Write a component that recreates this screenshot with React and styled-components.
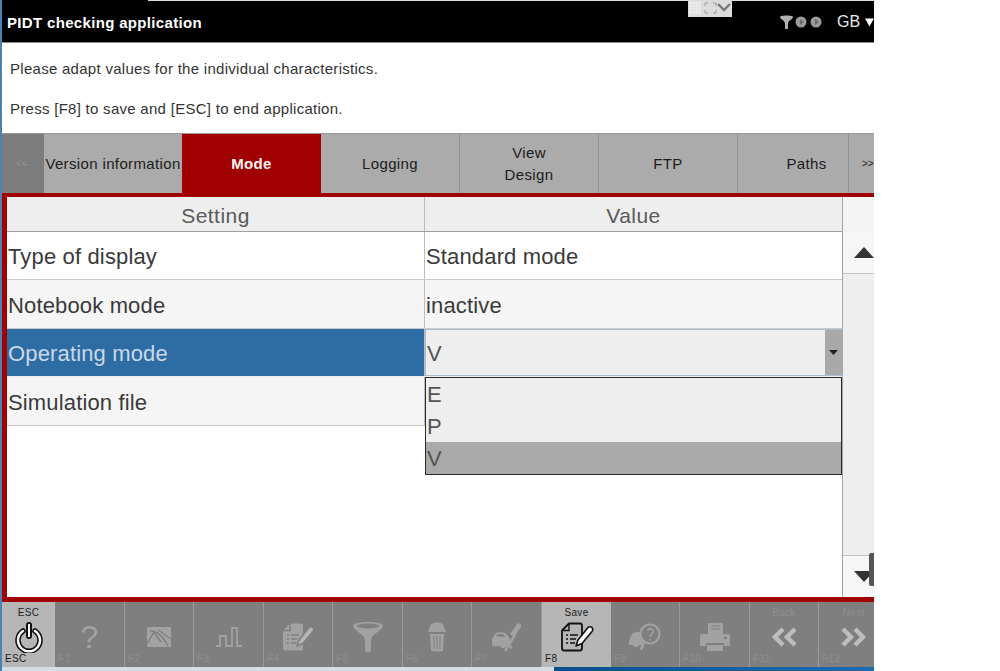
import React from "react";
import styled, { createGlobalStyle } from "styled-components";

const Global = createGlobalStyle`
  html, body { margin: 0; padding: 0; background: #fff; }
  body { font-family: "Liberation Sans", Arial, sans-serif; }
`;

const Frame = styled.div`
  position: relative;
  width: 872px;
  height: 671px;
  overflow: hidden;
  border-left: 2px solid #4b82b5;
  display: flex;
  flex-direction: column;
  background: #fff;
`;

const Header = styled.header`
  position: relative;
  flex: 0 0 43px;
  box-sizing: border-box;
  background: linear-gradient(to right, #000 146px, #ddd 146px) top / 100% 1px no-repeat, #000;
  border-bottom: 1px solid #8a8a8a;
  display: flex;
  align-items: center;
  justify-content: space-between;
  padding: 0 0 0 5px;
  color: #fff;
`;

const Title = styled.h1`
  margin: 0;
  font-size: 15px;
  font-weight: 700;
  letter-spacing: 0.33px;
  position: relative;
  top: 1px;
`;

const Status = styled.div`
  display: flex;
  align-items: center;
  gap: 15px;
  font-size: 16px;
  color: #e8e8e8;
  position: relative;
  top: 1px;
`;

const Lang = styled.span`
  display: flex;
  align-items: center;
  gap: 5px;
  width: 37px;
  white-space: nowrap;
`;

const WindowWidget = styled.div`
  position: absolute;
  left: 686px;
  top: 0;
  width: 44px;
  height: 17px;
  background: #dcdcdc;
`;

const Message = styled.section`
  flex: 0 0 90px;
  box-sizing: border-box;
  padding: 18px 0 0 8px;
  font-size: 15px;
  letter-spacing: 0.28px;
  color: #333;
  display: flex;
  flex-direction: column;
  gap: 24px;
  line-height: 16px;
`;

const Tabs = styled.nav`
  flex: 0 0 60px;
  display: flex;
  background: #ababab;
  box-sizing: border-box;
  border-top: 1px solid #999;
`;

const Tab = styled.div`
  flex: 0 0 ${(p) => p.$w}px;
  box-sizing: border-box;
  display: flex;
  align-items: center;
  justify-content: center;
  text-align: center;
  padding-left: ${(p) => p.$shift || 0}px;
  padding-top: ${(p) => (p.$active ? 0 : 1)}px;
  font-size: 15px;
  line-height: 22px;
  letter-spacing: 0.36px;
  white-space: nowrap;
  color: ${(p) => (p.$active ? "#f4f4f4" : "#1c1c1c")};
  font-weight: ${(p) => (p.$active ? 700 : 400)};
  background: ${(p) => (p.$active ? "#a00000" : "#ababab")};
  border-right: ${(p) => (p.$sep ? "1px solid #8795a3" : "none")};
`;

const Pager = styled.div`
  flex: 0 0 ${(p) => p.$w}px;
  display: flex;
  align-items: center;
  box-sizing: border-box;
  padding-left: ${(p) => p.$pad}px;
  font-size: 10px;
  font-weight: 400;
  color: ${(p) => p.$color};
  background: ${(p) => p.$bg};
`;

const RedPanel = styled.main`
  flex: 0 0 409px;
  box-sizing: border-box;
  border: 5px solid #a00000;
  border-width: 4px 0 5px 5px;
  background: #fff;
  display: flex;
  position: relative;
`;

const TableArea = styled.div`
  flex: 0 0 836px;
  display: flex;
  flex-direction: column;
  border-right: 1px solid #9aa8b5;
  box-sizing: border-box;
`;

const Row = styled.div`
  display: grid;
  grid-template-columns: 418px 1fr;
  box-sizing: border-box;
  height: ${(p) => p.$h}px;
  background: ${(p) => p.$bg || "#fff"};
  border-bottom: 1px solid ${(p) => p.$line || "#c9c9c9"};
`;

const HeadCell = styled.div`
  display: flex;
  align-items: center;
  justify-content: center;
  padding-top: 3px;
  font-size: 21px;
  letter-spacing: 0.45px;
  color: #5a5a5a;
  border-right: 1px solid #bdbdbd;
  &:last-child { border-right: 0; }
`;

const Cell = styled.div`
  display: flex;
  align-items: center;
  box-sizing: border-box;
  padding: 3px 0 0 1px;
  font-size: 22px;
  letter-spacing: 0.15px;
  color: ${(p) => (p.$selected ? "#c9d9e8" : "#3a3a3a")};
  background: ${(p) => (p.$selected ? "#2e6ca4" : "transparent")};
  border-right: ${(p) => (p.$second ? "0" : "1px solid #bdbdbd")};
`;

const Combo = styled.div`
  display: flex;
  box-sizing: border-box;
  background: #eeeeee;
  border: 1px solid #a9bdd0;
  border-right: 0;
`;

const ComboValue = styled.div`
  flex: 1;
  display: flex;
  align-items: center;
  padding: 2px 0 0 1px;
  font-size: 22px;
  color: #555;
`;

const ComboButton = styled.div`
  flex: 0 0 17px;
  background: #a9a9a9;
  display: flex;
  align-items: center;
  justify-content: center;
`;

const DropList = styled.ul`
  position: absolute;
  left: 418px;
  top: 180px;
  width: 417px;
  height: 98px;
  box-sizing: border-box;
  margin: 0;
  padding: 0;
  list-style: none;
  background: #eeeeee;
  border: 1px solid #2a2a2a;
`;

const DropItem = styled.li`
  box-sizing: border-box;
  height: ${(p) => p.$h}px;
  display: flex;
  align-items: center;
  padding: 2px 0 0 1px;
  font-size: 22px;
  color: #555;
  background: ${(p) => (p.$selected ? "#aaaaaa" : "#eeeeee")};
`;

const Scrollbar = styled.aside`
  flex: 1;
  display: flex;
  flex-direction: column;
  background: #eeeeee;
  position: relative;
`;

const ScrollCorner = styled.div`
  flex: 0 0 35px;
  background: #f3f3f3;
`;

const ScrollButton = styled.div`
  flex: 0 0 ${(p) => p.$h}px;
  box-sizing: border-box;
  background: #f6f6f6;
  display: flex;
  align-items: center;
  padding-left: 11px;
  border-${(p) => p.$edge}: 1px solid #c4c4c4;
`;

const ScrollTrack = styled.div`
  flex: 1;
`;

const Blob = styled.div`
  position: absolute;
  right: 0;
  bottom: 11px;
  width: 5px;
  height: 33px;
  border-radius: 2px 0 0 2px;
  background: #555;
`;

const Footer = styled.footer`
  flex: 0 0 65px;
  display: flex;
  background: #7f7f7f;
  overflow: hidden;
`;

const FnKey = styled.div`
  flex: 0 0 ${(p) => p.$w}px;
  box-sizing: border-box;
  display: flex;
  flex-direction: column;
  align-items: center;
  background: ${(p) => (p.$on ? "#b6b6b6" : "#7f7f7f")};
  color: ${(p) => (p.$on ? "#1c1c1c" : "#8e8e8e")};
  border-right: ${(p) => (p.$on ? "0" : "1px solid #9a9a9a")};
  padding-top: 5px;
`;

const KeyLabel = styled.div`
  height: 12px;
  font-size: 10px;
  line-height: 12px;
  letter-spacing: 0.3px;
`;

const KeyIcon = styled.div`
  height: 32px;
  margin-top: 2px;
  display: flex;
  align-items: center;
  justify-content: center;
`;

const KeyCode = styled.div`
  align-self: flex-start;
  padding-left: 3px;
  font-size: 10px;
  line-height: 12px;
  letter-spacing: 0.3px;
`;

const QuestionMark = styled.span`
  font-size: 32px;
  color: #a2a2a2;
`;

const BottomStrip = styled.div`
  flex: 1;
  background: linear-gradient(to right, #d5dde4 552px, #0a4f8c 552px, #1b6cb0 100%);
`;

const DIM = "#a2a2a2";
const BG = "#7f7f7f";

const PowerIcon = () => (
  <svg width="28" height="32" viewBox="0 0 28 32" fill="none">
    <path d="M8 10 A11 11 0 1 0 20 10" stroke="#111" strokeWidth="5.5" strokeLinecap="round" />
    <path d="M8 10 A11 11 0 1 0 20 10" stroke="#fff" strokeWidth="2.4" strokeLinecap="round" />
    <rect x="11" y="1" width="6" height="17" rx="3" fill="#111" />
    <rect x="13" y="3" width="2" height="13" fill="#fff" />
  </svg>
);

const ChartIcon = () => (
  <svg width="24" height="20" viewBox="0 0 24 20">
    <rect width="24" height="20" rx="1" fill={DIM} />
    <path d="M0 17 L7 5 L14 15 M3 4 C10 4 16 9 21 19 M11 3 L24 12" stroke={BG} strokeWidth="1.4" fill="none" />
  </svg>
);

const PulseIcon = () => (
  <svg width="26" height="20" viewBox="0 0 26 20" fill="none">
    <path d="M0 19 H4 V9 H10 V19 H16 V1 H21 V19 H26" stroke={DIM} strokeWidth="1.8" />
  </svg>
);

const EditDocIcon = ({ dim }) => {
  const line = dim ? BG : "#111";
  return (
    <svg width="34" height="30" viewBox="0 0 34 30" fill="none">
      <path
        d="M9 1.5 H20 Q22 1.5 22 3.5 V26 Q22 28.5 20 28.5 H4 Q2 28.5 2 26 V8.5 Z"
        fill={dim ? DIM : "#b6b6b6"}
        stroke={dim ? "none" : "#111"}
        strokeWidth="1.8"
        strokeLinejoin="round"
      />
      <path d="M9 1.5 V8.5 H2" stroke={line} strokeWidth="1.4" />
      <path d="M6 13 H8 M10 13 H18 M6 17 H8 M10 17 H16 M6 21 H8 M10 21 H15" stroke={line} strokeWidth="1.4" />
      <path
        d="M16 24 L18 18 L28 5.5 Q30 4 32 5.5 Q33.5 7.5 32 9.5 L22 21.5 Z"
        fill={dim ? "#b4b4b4" : "#fff"}
        stroke={line}
        strokeWidth="1.6"
        strokeLinejoin="round"
      />
    </svg>
  );
};

const FunnelIcon = () => (
  <svg width="32" height="32" viewBox="0 0 32 32">
    <path d="M1 5 C1 -0.5 31 -0.5 31 5 C31 9 20 13 19 18 V29 C19 32 13 32 13 29 V18 C12 13 1 9 1 5 Z" fill={DIM} />
    <ellipse cx="16" cy="5" rx="11" ry="2.4" fill={BG} />
  </svg>
);

const TrashIcon = () => (
  <svg width="18" height="30" viewBox="0 0 18 30">
    <path d="M2 5 C2 -1 16 -1 16 5 L18 10 H0 Z" fill={DIM} />
    <path d="M2 12 H16 L15 28 C15 30 3 30 3 28 Z" fill={DIM} />
    <path d="M6 14 V27 M9 14 V27 M12 14 V27" stroke={BG} strokeWidth="1" />
  </svg>
);

const CarToolIcon = () => (
  <svg width="32" height="30" viewBox="0 0 32 30">
    <path d="M1 17 L4 12 C5 10 12 10 14 11 L18 15 L20 20 L18 24 H15 C14 27 10 27 9 24 H5 C3 25 1 24 1 22 Z" fill={DIM} />
    <path d="M5 14 L7 12 H12 L14 15 Z" fill={BG} />
    <path d="M19 12 L26 2 C28 0 31 2 30 5 L23 15 Z" fill={DIM} />
    <path d="M14 29 L24 13 M12 19 L21 26" stroke={DIM} strokeWidth="2.5" />
  </svg>
);

const CarSearchIcon = () => (
  <svg width="32" height="28" viewBox="0 0 32 28" fill="none">
    <path d="M0 18 L3 11 C4 9 12 8 15 10 L15 22 H10 C9 25 5 25 4 22 H0 Z" fill={DIM} />
    <circle cx="21" cy="11" r="9.5" fill={BG} stroke={DIM} strokeWidth="2.2" />
    <path d="M15 19 L12 27" stroke={DIM} strokeWidth="2.5" />
    <path d="M18.5 8 C19.5 4.5 25 5 24 9 C23.5 11 21 11 21 14 M21 16 V17.5" stroke={DIM} strokeWidth="1.6" />
  </svg>
);

const PrinterIcon = () => (
  <svg width="30" height="28" viewBox="0 0 30 28">
    <rect x="8" y="0" width="15" height="11" fill={DIM} />
    <path d="M11 3 H20 M11 6 H20" stroke={BG} strokeWidth="1" />
    <path d="M2 11 H28 C29 11 30 12 30 13 V23 H24 V20 H6 V23 H0 V13 C0 12 1 11 2 11 Z" fill={DIM} />
    <rect x="7" y="22" width="16" height="6" fill={DIM} />
    <rect x="24" y="14" width="3" height="2" fill={BG} />
  </svg>
);

const Chevrons = ({ flip }) => (
  <svg width="27" height="20" viewBox="0 0 27 20" fill="none" style={flip ? { transform: "scaleX(-1)" } : undefined}>
    <path d="M12 2 L4 10 L12 18 M24 2 L16 10 L24 18" stroke="#bdbdbd" strokeWidth="4.5" />
  </svg>
);

const Tri = ({ size, down, color }) => (
  <svg width={size} height={size * 0.55} viewBox="0 0 20 11">
    <path d={down ? "M0 0 H20 L10 11 Z" : "M10 0 L20 11 H0 Z"} fill={color} />
  </svg>
);

const keys = [
  { w: 53, top: "ESC", code: "ESC", on: true, icon: <PowerIcon /> },
  { w: 70, code: "F1", icon: <QuestionMark>?</QuestionMark> },
  { w: 69, code: "F2", icon: <ChartIcon /> },
  { w: 70, code: "F3", icon: <PulseIcon /> },
  { w: 69, code: "F4", icon: <EditDocIcon dim /> },
  { w: 70, code: "F5", icon: <FunnelIcon /> },
  { w: 69, code: "F6", icon: <TrashIcon /> },
  { w: 70, code: "F7", icon: <CarToolIcon /> },
  { w: 69, top: "Save", code: "F8", on: true, icon: <EditDocIcon /> },
  { w: 69, code: "F9", icon: <CarSearchIcon /> },
  { w: 70, code: "F10", icon: <PrinterIcon /> },
  { w: 69, top: "Back", code: "F11", icon: <Chevrons /> },
  { w: 70, top: "Next", code: "F12", icon: <Chevrons flip /> },
];

export default function App() {
  return (
    <>
      <Global />
      <Frame>
        <Header>
          <Title>PIDT checking application</Title>
          <WindowWidget>
            <svg width="44" height="17" viewBox="0 0 44 17" fill="none">
              <path d="M3 1 V15 M6 1 V15 M9 1 V15 M12 1 V15 M1 3 H13 M1 6 H13 M1 9 H13 M1 12 H13" stroke="#f0f0f0" strokeWidth="1" />
              <path d="M17 6 V3 H20 M25 3 H28 V6 M17 10 V13 H20 M25 13 H28 V10" stroke="#999" strokeWidth="1" />
              <path d="M30 4 L36 10 L42 4" stroke="#777" strokeWidth="2.4" />
            </svg>
          </WindowWidget>
          <Status>
            <svg width="42" height="14" viewBox="0 0 42 14">
              <path d="M0 2 C0 0 13 0 13 2 C13 4 9 5 8 8 V14 H5 V8 C4 5 0 4 0 2 Z" fill="#b0b0b0" />
              <circle cx="21" cy="7" r="5.5" fill="#9a9a9a" />
              <circle cx="36" cy="7" r="5.5" fill="#9a9a9a" />
              <path d="M20 4 L24 7 L20 10 Z M35 4 L39 7 L35 10 Z" fill="#6a6a6a" />
            </svg>
            <Lang>
              GB
              <svg width="10" height="9" viewBox="0 0 10 9">
                <path d="M0 0 H10 L5 9 Z" fill="#fff" />
              </svg>
            </Lang>
          </Status>
        </Header>
        <Message>
          <div>Please adapt values for the individual characteristics.</div>
          <div>Press [F8] to save and [ESC] to end application.</div>
        </Message>
        <Tabs>
          <Pager $w={42} $pad={14} $bg="#7c7c7c" $color="#929292">&lt;&lt;</Pager>
          <Tab $w={138}>Version information</Tab>
          <Tab $w={139} $active>Mode</Tab>
          <Tab $w={139} $sep>Logging</Tab>
          <Tab $w={139} $sep>View<br />Design</Tab>
          <Tab $w={139} $sep>FTP</Tab>
          <Tab $w={111} $shift={27} $sep>Paths</Tab>
          <Pager $w={25} $pad={13} $bg="#ababab" $color="#222">&gt;&gt;</Pager>
        </Tabs>
        <RedPanel>
          <TableArea>
            <Row $h={35} $bg="#eeeeee" $line="#a0a0a0">
              <HeadCell>Setting</HeadCell>
              <HeadCell>Value</HeadCell>
            </Row>
            <Row $h={48}>
              <Cell>Type of display</Cell>
              <Cell $second>Standard mode</Cell>
            </Row>
            <Row $h={49} $bg="#f5f5f5">
              <Cell>Notebook mode</Cell>
              <Cell $second>inactive</Cell>
            </Row>
            <Row $h={48} $line="#eeeeee">
              <Cell $selected>Operating mode</Cell>
              <Combo>
                <ComboValue>V</ComboValue>
                <ComboButton>
                  <Tri size={9} down color="#222" />
                </ComboButton>
              </Combo>
            </Row>
            <Row $h={49} $bg="#f5f5f5">
              <Cell>Simulation file</Cell>
              <Cell $second />
            </Row>
          </TableArea>
          <DropList>
            <DropItem $h={32}>E</DropItem>
            <DropItem $h={32}>P</DropItem>
            <DropItem $h={32} $selected>V</DropItem>
          </DropList>
          <Scrollbar>
            <ScrollCorner />
            <ScrollButton $h={42} $edge="bottom">
              <Tri size={20} color="#333" />
            </ScrollButton>
            <ScrollTrack />
            <ScrollButton $h={42} $edge="top">
              <Tri size={20} down color="#333" />
            </ScrollButton>
            <Blob />
          </Scrollbar>
        </RedPanel>
        <Footer>
          {keys.map((k) => (
            <FnKey key={k.code} $w={k.w} $on={k.on}>
              <KeyLabel>{k.top}</KeyLabel>
              <KeyIcon>{k.icon}</KeyIcon>
              <KeyCode>{k.code}</KeyCode>
            </FnKey>
          ))}
        </Footer>
        <BottomStrip />
      </Frame>
    </>
  );
}
